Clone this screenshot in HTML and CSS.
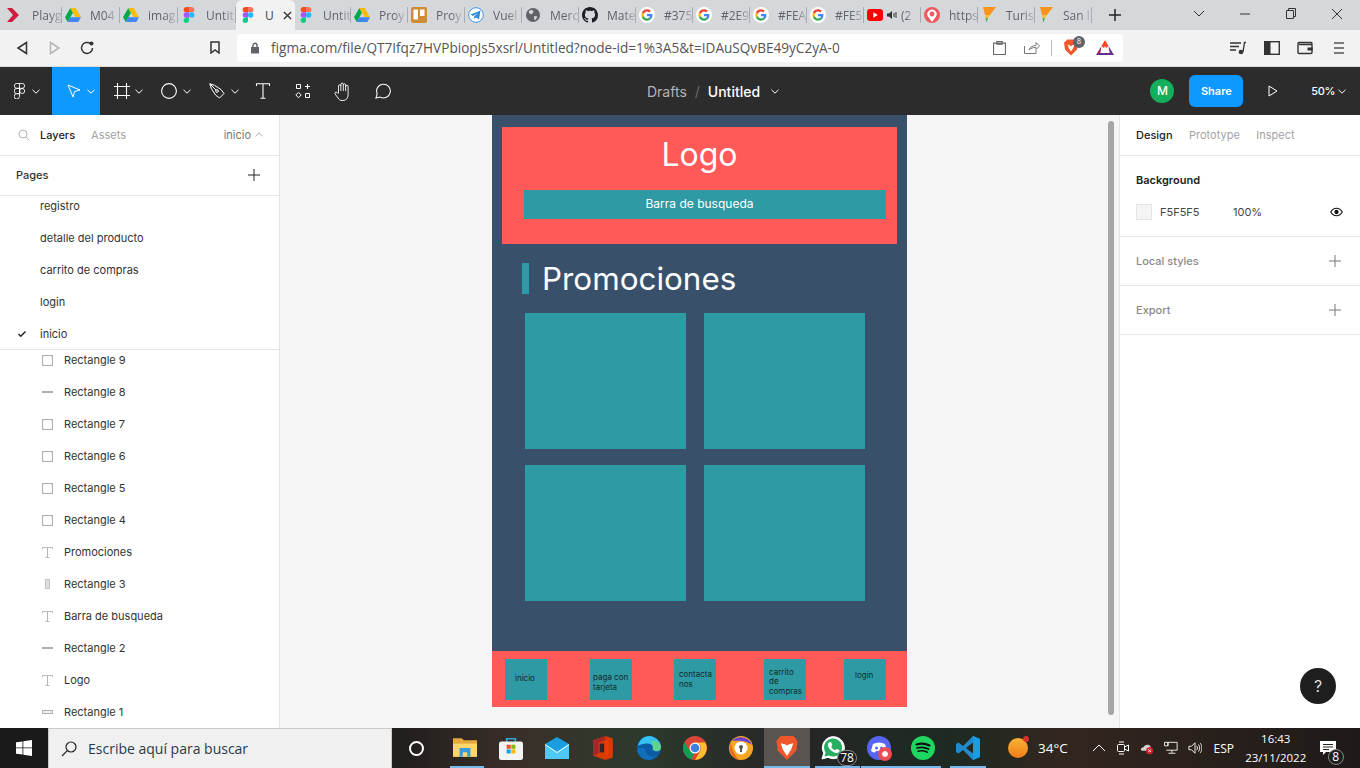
FILE: index.html
```html
<!DOCTYPE html>
<html lang="es">
<head>
    <meta charset="UTF-8">
    <title>Untitled – Figma</title>
    <link rel="stylesheet" href="styles.css">
</head>
<body>
    <svg class="defs" width="0" height="0">
        <symbol id="i-figma" viewBox="0 0 12 18">
            <path fill="#f24e1e" d="M3 0h3v6H3a3 3 0 0 1 0-6z"/>
            <path fill="#ff7262" d="M6 0h3a3 3 0 0 1 0 6H6z"/>
            <path fill="#a259ff" d="M3 6h3v6H3a3 3 0 0 1 0-6z"/>
            <circle fill="#1abcfe" cx="9" cy="9" r="3"/>
            <path fill="#0acf83" d="M3 12h3v3a3 3 0 0 1-6 0 3 3 0 0 1 3-3z"/>
        </symbol>
        <symbol id="i-drive" viewBox="0 0 24 21">
            <path fill="#00a94b" d="M8 0 0 14l4 7 8-14z"/>
            <path fill="#fbbc04" d="M8 0h8l8 14h-8z"/>
            <path fill="#4285f4" d="M4 21h16l4-7H8z"/>
        </symbol>
        <symbol id="i-g" viewBox="-10 -10 68 68">
            <circle cx="24" cy="24" r="34" fill="#fff"/>
            <path fill="#EA4335" d="M24 9.5c3.54 0 6.71 1.22 9.21 3.6l6.85-6.85C35.9 2.38 30.47 0 24 0 14.62 0 6.51 5.38 2.56 13.22l7.98 6.19C12.43 13.72 17.74 9.5 24 9.5z"/>
            <path fill="#4285F4" d="M46.98 24.55c0-1.57-.15-3.09-.38-4.55H24v9.02h12.94c-.58 2.96-2.26 5.48-4.78 7.18l7.73 6c4.51-4.18 7.09-10.36 7.09-17.65z"/>
            <path fill="#FBBC05" d="M10.53 28.59c-.48-1.45-.76-2.99-.76-4.59s.27-3.14.76-4.59l-7.98-6.19C.92 16.46 0 20.12 0 24c0 3.88.92 7.54 2.56 10.78l7.97-6.19z"/>
            <path fill="#34A853" d="M24 48c6.48 0 11.93-2.13 15.89-5.81l-7.73-6c-2.15 1.45-4.92 2.3-8.16 2.3-6.26 0-11.57-4.22-13.47-9.91l-7.98 6.19C6.51 42.62 14.62 48 24 48z"/>
        </symbol>
        <symbol id="i-flag" viewBox="0 0 16 16">
            <path fill="#f7931e" d="M2 0h13L9 8H4z"/>
            <path fill="#fbc02d" d="M4 8h5l-2 3H4.500z"/>
            <path fill="#4caf50" d="M4.500 11H7l-1 3H5z"/>
            <path fill="#26c6da" d="M5 14h1l-.5 2z"/>
        </symbol>
        <symbol id="i-rect" viewBox="0 0 10 10">
            <rect x=".5" y=".5" width="9" height="9" fill="none" stroke="#b0b0b0"/>
        </symbol>
        <symbol id="i-text" viewBox="0 0 12 12">
            <path fill="none" stroke="#b0b0b0" d="M.5 2.500V.5h11v2M6 .5v11M4 11.500h4"/>
        </symbol>
        <symbol id="i-plus" viewBox="0 0 12 12">
            <path fill="none" stroke="currentColor" d="M6 0v12M0 6h12"/>
        </symbol>
        <symbol id="i-caret" viewBox="0 0 8 5">
            <path fill="none" stroke="currentColor" d="m.5.8 3.500 3.400L7.500.8"/>
        </symbol>
    </svg>

    <!-- browser tabs -->
    <div class="tabs">
        <div class="tab first">
            <svg class="tab-icon" viewBox="0 0 16 16"><path fill="#d01c3f" d="M2 1h5l7 7-7 7H2l6-7z"/></svg>
            <span class="tab-title">Playg</span>
        </div>
        <div class="tab wide"><svg class="tab-icon"><use href="#i-drive"/></svg><span class="tab-title">M04</span></div>
        <div class="tab wide"><svg class="tab-icon"><use href="#i-drive"/></svg><span class="tab-title">imag</span></div>
        <div class="tab wide"><svg class="tab-icon"><use href="#i-figma"/></svg><span class="tab-title">Untit</span></div>
        <div class="tab active">
            <svg class="tab-icon"><use href="#i-figma"/></svg>
            <span class="tab-title">U</span>
            <svg class="tab-close" viewBox="0 0 10 10"><path fill="none" stroke="#333" stroke-width="1.500" d="m1 1 8 8M9 1 1 9"/></svg>
        </div>
        <div class="tab narrow"><svg class="tab-icon"><use href="#i-figma"/></svg><span class="tab-title">Untit</span></div>
        <div class="tab"><svg class="tab-icon"><use href="#i-drive"/></svg><span class="tab-title">Proy</span></div>
        <div class="tab">
            <svg class="tab-icon" viewBox="0 0 16 16"><rect width="16" height="16" rx="2" fill="#cf8c33"/><rect x="2.500" y="2.500" width="4.500" height="10" fill="#fff"/><rect x="9" y="2.500" width="4.500" height="6.500" fill="#fff"/></svg>
            <span class="tab-title">Proy</span>
        </div>
        <div class="tab">
            <svg class="tab-icon" viewBox="0 0 16 16"><circle cx="8" cy="8" r="7.300" fill="#fff" stroke="#3a97e8"/><path fill="#2f8fe0" d="m2.500 7.500 10-4-1.500 9-3-2-1.500 1.500-.5-2.500 4-3.500-5 3z"/></svg>
            <span class="tab-title">Vuel</span>
        </div>
        <div class="tab">
            <svg class="tab-icon" viewBox="0 0 16 16"><circle cx="8" cy="8" r="7" fill="#5f6368"/><path fill="#d5d8db" d="M4 3.500 7.500 3l1 2-2 2.500-2.500-1.500zM9 9l3.500.5-2 3.500-1.500-1z"/></svg>
            <span class="tab-title">Merc</span>
        </div>
        <div class="tab">
            <svg class="tab-icon" viewBox="0 0 16 16"><path fill="#1b1f23" d="M8 0C3.580 0 0 3.580 0 8c0 3.540 2.290 6.530 5.470 7.590.4.07.55-.17.55-.38 0-.19-.01-.82-.01-1.490-2.010.37-2.530-.49-2.690-.94-.09-.23-.48-.94-.82-1.130-.28-.15-.68-.52-.01-.53.63-.01 1.080.58 1.230.82.72 1.210 1.870.87 2.330.66.07-.52.28-.87.51-1.070-1.780-.2-3.640-.89-3.640-3.950 0-.87.31-1.590.82-2.150-.08-.2-.36-1.020.08-2.120 0 0 .67-.21 2.200.82.64-.18 1.320-.27 2-.27.68 0 1.360.09 2 .27 1.530-1.040 2.200-.82 2.200-.82.44 1.100.16 1.920.08 2.120.51.56.82 1.270.82 2.150 0 3.070-1.870 3.750-3.650 3.950.29.25.54.73.54 1.480 0 1.070-.01 1.930-.01 2.200 0 .21.15.46.55.38A8.013 8.013 0 0 0 16 8c0-4.420-3.580-8-8-8z"/></svg>
            <span class="tab-title">Mate</span>
        </div>
        <div class="tab"><svg class="tab-icon"><use href="#i-g"/></svg><span class="tab-title">#375</span></div>
        <div class="tab"><svg class="tab-icon"><use href="#i-g"/></svg><span class="tab-title">#2E9</span></div>
        <div class="tab"><svg class="tab-icon"><use href="#i-g"/></svg><span class="tab-title">#FEA</span></div>
        <div class="tab"><svg class="tab-icon"><use href="#i-g"/></svg><span class="tab-title">#FE5</span></div>
        <div class="tab yt">
            <svg class="tab-icon" viewBox="0 0 16 12"><rect width="16" height="12" rx="3" fill="#f00"/><path fill="#fff" d="m6.300 3.300 4.500 2.700-4.500 2.700z"/></svg>
            <svg class="tab-audio" viewBox="0 0 10 10"><path fill="#333" d="M0 3.500h2L5 1v8L2 6.500H0zM6.500 3h1v4h-1zM8.500 2h1v6h-1z"/></svg>
            <span class="tab-title">(2</span>
        </div>
        <div class="tab">
            <svg class="tab-icon" viewBox="0 0 16 16"><circle cx="8" cy="8" r="8" fill="#f0595f"/><path fill="#fff" d="M8 15 4.300 10A4.600 4.600 0 1 1 11.700 10z"/><circle cx="8" cy="7" r="2.400" fill="#f0595f"/></svg>
            <span class="tab-title">https</span>
        </div>
        <div class="tab"><svg class="tab-icon"><use href="#i-flag"/></svg><span class="tab-title">Turis</span></div>
        <div class="tab"><svg class="tab-icon"><use href="#i-flag"/></svg><span class="tab-title">San l</span></div>
        <svg class="new-tab" viewBox="0 0 12 12"><path fill="none" stroke="#222" stroke-width="1.500" d="M6 0v12M0 6h12"/></svg>
        <div class="window-btns">
            <svg viewBox="0 0 46 14"><path fill="none" stroke="#333" d="m18 4 5 5 5-5"/></svg>
            <svg viewBox="0 0 46 14"><path fill="none" stroke="#333" d="M18 7h10"/></svg>
            <svg viewBox="0 0 46 14"><path fill="none" stroke="#333" d="M18.500 3.500h7v8h-7zM20.500 3.500v-2h7v8h-2"/></svg>
            <svg viewBox="0 0 46 14"><path fill="none" stroke="#333" d="m18 2 10 10M28 2 18 12"/></svg>
        </div>
    </div>

    <!-- address bar -->
    <div class="address-row">
        <div class="nav-btns">
            <svg class="nav-icon" viewBox="0 0 12 14"><path fill="none" stroke="#333" stroke-width="1.500" d="M10.500 1.500v11L2 7z"/></svg>
            <svg class="nav-icon off" viewBox="0 0 12 14"><path fill="none" stroke="#b5b5b5" stroke-width="1.500" d="M1.500 1.500v11L10 7z"/></svg>
            <svg class="nav-icon reload" viewBox="0 0 14 14"><path fill="none" stroke="#333" stroke-width="1.500" d="M12.500 7a5.500 5.500 0 1 1-2-4.300"/><circle cx="11.500" cy="2.500" r="2" fill="#333"/></svg>
        </div>
        <svg class="bookmark" viewBox="0 0 10 13"><path fill="none" stroke="#333" stroke-width="1.500" d="M1 1h8v11L5 9l-4 3z"/></svg>
        <div class="url-pill">
            <svg class="lock" viewBox="0 0 10 12"><path fill="#5f6368" d="M1 5h8v6.500H1z"/><path fill="none" stroke="#5f6368" stroke-width="1.400" d="M3 5V3.300a2 2 0 0 1 4 0V5"/></svg>
            <span class="url">figma.com/file/QT7Ifqz7HVPbiopJs5xsrl/Untitled?node-id=1%3A5&amp;t=IDAuSQvBE49yC2yA-0</span>
            <div class="pill-tools">
                <svg class="clip" viewBox="0 0 12 13"><path fill="none" stroke="#666" d="M.5 2h11v10.500H.5zM3.500.5h5V3h-5z"/></svg>
                <svg class="share-ico" viewBox="0 0 16 13"><path fill="none" stroke="#777" d="M.5 5v7.500H12V9M5 9c1-3 4-4.500 7-4.500V1.500L15.500 5 12 8.500V6.500C9 6.500 7 7 5 9z"/></svg>
                <span class="pill-sep"></span>
                <div class="brave-wrap">
                    <svg class="brave-ico" viewBox="0 0 14 16"><path fill="#f1562b" d="M3 0h8l1 1.500L14 3l-1 7-6 6-6-6L0 3l2-1.500z"/><path fill="#fff" d="M3.500 5 6 6l1 1 1-1 2.500-1L9 9l-2 3-2-3z"/></svg>
                    <span class="brave-badge">8</span>
                </div>
                <svg class="bat" viewBox="0 0 18 15"><path fill="#ff4724" d="M9 0 5.500 6 9 9l3.500-3z"/><path fill="#9e1f63" d="M5.500 6 0 15h4z"/><path fill="#662d91" d="M12.500 6 18 15h-4z"/><path fill="#662d91" d="M0 15h18l-4-2H4z"/><path fill="#fff" d="M9 6 6 12h6z"/></svg>
            </div>
        </div>
        <div class="browser-tools">
            <svg viewBox="0 0 16 13"><path fill="none" stroke="#333" stroke-width="1.300" d="M0 1.500h11M0 5h9M0 8.500h6"/><circle cx="11" cy="10.500" r="2.300" fill="#333"/><path fill="none" stroke="#333" stroke-width="1.300" d="M13 10.500 14.500 1H16"/></svg>
            <svg viewBox="0 0 16 14"><rect x=".7" y=".7" width="14.600" height="12.600" fill="none" stroke="#333" stroke-width="1.400"/><rect x="1" y="1" width="5.500" height="12" fill="#333"/></svg>
            <svg viewBox="0 0 16 13"><path fill="none" stroke="#333" stroke-width="1.400" d="M15 3V2a1 1 0 0 0-1-1H2a1 1 0 0 0-1 1v9a1 1 0 0 0 1 1h12a1 1 0 0 0 1-1V4a1 1 0 0 0-1-1H2"/><rect x="10.500" y="6" width="5" height="3" fill="#333"/></svg>
            <svg viewBox="0 0 16 13"><path fill="none" stroke="#555" stroke-width="1.500" d="M3 1.500h10M3 6.500h10M3 11.500h10"/></svg>
        </div>
    </div>

    <!-- figma toolbar -->
    <div class="toolbar">
        <div class="tool-group">
            <div class="tool logo-tool">
                <svg class="ico-logo" viewBox="0 0 12 18"><path fill="none" stroke="#fff" d="M3 .5h6a2.750 2.750 0 0 1 0 5.500H3A2.750 2.750 0 0 1 3 .5zM6 .5v11.500M3 6h3v6H3a3 3 0 0 1 0-6zM3 12h3v3a3 3 0 0 1-6 0 3 3 0 0 1 3-3z"/><circle cx="9" cy="9" r="2.800" fill="none" stroke="#fff"/></svg>
                <svg class="caret"><use href="#i-caret"/></svg>
            </div>
            <div class="tool move-tool">
                <svg class="ico-move" viewBox="0 0 14 14"><path fill="none" stroke="#fff" d="M1 1 13 6 7.500 7.500 6 13z"/></svg>
                <svg class="caret"><use href="#i-caret"/></svg>
            </div>
            <div class="tool frame-tool">
                <svg class="ico" viewBox="0 0 16 16"><path fill="none" stroke="#fff" stroke-width="1.100" d="M3.500 0v16M12.500 0v16M0 3.500h16M0 12.500h16"/></svg>
                <svg class="caret"><use href="#i-caret"/></svg>
            </div>
            <div class="tool">
                <svg class="ico" viewBox="0 0 16 16"><circle cx="8" cy="8" r="7.400" fill="none" stroke="#fff" stroke-width="1.100"/></svg>
                <svg class="caret"><use href="#i-caret"/></svg>
            </div>
            <div class="tool">
                <svg class="ico" viewBox="0 0 16 16"><path fill="none" stroke="#fff" d="M.8.8 5.500 2.300 12 6.500l3 4-4.500 4.500-4-3L2.300 5.500zM.8.800 7 7"/><circle cx="8" cy="8" r="1.300" fill="none" stroke="#fff"/></svg>
                <svg class="caret"><use href="#i-caret"/></svg>
            </div>
            <div class="tool single">
                <svg class="ico" viewBox="0 0 14 16"><path fill="none" stroke="#fff" stroke-width="1.100" d="M.5 3V.7h13V3M7 .7v14.600M4.500 15.300h5"/></svg>
            </div>
            <div class="tool single">
                <svg class="ico" viewBox="0 0 16 16"><path fill="none" stroke="#fff" d="M1.500 1.500h4v4h-4zM10.500 10.500h4v4h-4zM3.500 9.300l2.700 2.700-2.700 2.700L.8 12zM12.500 1v5M10 3.500h5"/></svg>
            </div>
            <div class="tool single">
                <svg class="ico-hand" viewBox="0 0 18 19"><path fill="none" stroke="#fff" stroke-width=".9" d="M4.500 11V4a1.200 1.200 0 0 1 2.400 0V2.300a1.200 1.200 0 0 1 2.400 0V3a1.200 1.200 0 0 1 2.400 0V4.500a1.200 1.200 0 0 1 2.400 0V13c0 3-2 5.500-5 5.500H8c-2 0-3-1-4-2.500L1 11.800c-.6-1.200 1-2.300 2-1.300l1.500 1.500M6.900 4v5M9.300 3v6M11.700 4v5"/></svg>
            </div>
            <div class="tool single">
                <svg class="ico" viewBox="0 0 17 17"><path fill="none" stroke="#fff" stroke-width="1.100" d="M1 16l1.300-4.500A7.300 7.300 0 1 1 5.500 15z"/></svg>
            </div>
        </div>
        <div class="doc-title">
            <span class="drafts">Drafts</span>
            <span class="slash">/</span>
            <span class="doc-name">Untitled</span>
            <svg class="caret"><use href="#i-caret"/></svg>
        </div>
        <div class="tool-right">
            <span class="avatar">M</span>
            <span class="share-btn">Share</span>
            <svg class="play" viewBox="0 0 10 12"><path fill="none" stroke="#fff" d="M1 1v10l8-5z"/></svg>
            <span class="zoom-val">50%</span>
            <svg class="caret"><use href="#i-caret"/></svg>
        </div>
    </div>

    <div class="workspace">
        <!-- layers panel -->
        <aside class="left-panel">
            <div class="panel-head">
                <svg class="search-ico" viewBox="0 0 12 12"><circle cx="5" cy="5" r="4" fill="none" stroke="#b3b3b3"/><path stroke="#b3b3b3" d="m8 8 3.500 3.500"/></svg>
                <span class="tab-on">Layers</span>
                <span class="tab-off">Assets</span>
                <span class="page-name">inicio</span>
                <svg class="caret up"><use href="#i-caret"/></svg>
            </div>
            <div class="pages-head">
                <span>Pages</span>
                <svg class="plus dark"><use href="#i-plus"/></svg>
            </div>
            <div class="page-list">
                <div class="page-row">registro</div>
                <div class="page-row">detalle del producto</div>
                <div class="page-row">carrito de compras</div>
                <div class="page-row">login</div>
                <div class="page-row current">
                    <svg class="check" viewBox="0 0 8 6"><path fill="none" stroke="#222" stroke-width="1.500" d="m.5 3 2.300 2.200L7.500.5"/></svg>
                    inicio
                </div>
            </div>
            <div class="layer-list">
                <div class="layer"><svg class="layer-ico"><use href="#i-rect"/></svg>Rectangle 9</div>
                <div class="layer"><span class="line-ico"></span>Rectangle 8</div>
                <div class="layer"><svg class="layer-ico"><use href="#i-rect"/></svg>Rectangle 7</div>
                <div class="layer"><svg class="layer-ico"><use href="#i-rect"/></svg>Rectangle 6</div>
                <div class="layer"><svg class="layer-ico"><use href="#i-rect"/></svg>Rectangle 5</div>
                <div class="layer"><svg class="layer-ico"><use href="#i-rect"/></svg>Rectangle 4</div>
                <div class="layer"><svg class="layer-ico"><use href="#i-text"/></svg>Promociones</div>
                <div class="layer"><span class="tall-ico"></span>Rectangle 3</div>
                <div class="layer"><svg class="layer-ico"><use href="#i-text"/></svg>Barra de busqueda</div>
                <div class="layer"><span class="line-ico"></span>Rectangle 2</div>
                <div class="layer"><svg class="layer-ico"><use href="#i-text"/></svg>Logo</div>
                <div class="layer"><span class="flat-ico"></span>Rectangle 1</div>
            </div>
        </aside>

        <!-- canvas with the mobile frame -->
        <main class="canvas">
            <div class="frame">
                <div class="frame-head">
                    <div class="logo">Logo</div>
                    <div class="search-bar">Barra de busqueda</div>
                </div>
                <div class="promo-title">
                    <span class="promo-mark"></span>
                    <span class="promo-text">Promociones</span>
                </div>
                <div class="promo-grid">
                    <div class="promo-card"></div>
                    <div class="promo-card"></div>
                    <div class="promo-card"></div>
                    <div class="promo-card"></div>
                </div>
                <div class="frame-nav">
                    <div class="nav-item n-inicio">inicio</div>
                    <div class="nav-item n-paga">paga con tarjeta</div>
                    <div class="nav-item n-contacta">contacta<br>nos</div>
                    <div class="nav-item n-carrito">carrito<br>de<br>compras</div>
                    <div class="nav-item n-login">login</div>
                </div>
            </div>
            <div class="scrollbar"></div>
        </main>

        <!-- design panel -->
        <aside class="right-panel">
            <div class="panel-head right-head">
                <span class="tab-on">Design</span>
                <span class="tab-off">Prototype</span>
                <span class="tab-off">Inspect</span>
            </div>
            <div class="bg-section">
                <div class="section-title">Background</div>
                <div class="bg-row">
                    <span class="swatch"></span>
                    <span class="hex">F5F5F5</span>
                    <span class="opacity">100%</span>
                    <svg class="eye" viewBox="0 0 14 10"><path fill="none" stroke="#111" stroke-width="1.200" d="M.8 5C2.500 2 4.500 1 7 1s4.500 1 6.200 4C11.500 8 9.500 9 7 9S2.500 8 .8 5z"/><circle cx="7" cy="5" r="2.300" fill="#111"/></svg>
                </div>
            </div>
            <div class="plus-section">
                <span>Local styles</span>
                <svg class="plus"><use href="#i-plus"/></svg>
            </div>
            <div class="plus-section">
                <span>Export</span>
                <svg class="plus"><use href="#i-plus"/></svg>
            </div>
        </aside>

        <div class="help">?</div>
    </div>

    <!-- windows taskbar -->
    <footer class="taskbar">
        <div class="start">
            <svg viewBox="0 0 16 16"><path fill="#fff" d="M0 2.300 6.500 1.400v6.100H0zM7.300 1.300 16 0v7.500H7.300zM0 8.300h6.500v6.200L0 13.700zM7.300 8.300H16V16l-8.700-1.200z"/></svg>
        </div>
        <div class="win-search">
            <svg viewBox="0 0 16 16"><circle cx="10" cy="6" r="5" fill="none" stroke="#222" stroke-width="1.200"/><path stroke="#222" stroke-width="1.200" d="M6.300 9.700 1 15"/></svg>
            <span>Escribe aquí para buscar</span>
        </div>
        <div class="cortana"><span class="cortana-ring"></span></div>
        <div class="app running explorer">
            <svg viewBox="0 0 22 20"><path fill="#e6a93c" d="M0 1h8l2 2h12v15H0z"/><path fill="#ffd66b" d="M0 6h22v12H0z"/><path fill="#3a9bdc" d="M6 10h10v8h-3v-4H9v4H6z"/></svg>
        </div>
        <div class="app">
            <svg viewBox="0 0 22 22"><path fill="none" stroke="#2aa7e0" stroke-width="1.500" d="M7 6V2.500h8V6"/><rect y="5" width="22" height="17" rx="2" fill="#f3f3f3"/><path fill="#f25022" d="M7 8h3.700v3.700H7z"/><path fill="#7fba00" d="M11.300 8H15v3.700h-3.700z"/><path fill="#00a4ef" d="M7 12.300h3.700V16H7z"/><path fill="#ffb900" d="M11.300 12.300H15V16h-3.700z"/></svg>
        </div>
        <div class="app">
            <svg viewBox="0 0 24 22"><path fill="#1b9de2" d="M0 7 12 0l12 7v15H0z"/><path fill="#50c8f5" d="M0 7l12 8 12-8v15H0z"/><path fill="#fff" d="M0 7l12 8 12-8v1L12 16 0 8z"/></svg>
        </div>
        <div class="app">
            <svg viewBox="0 0 18 22"><path fill="#d83b01" d="M11 0 0 4v14l11 4 7-2V2z"/><path fill="#a4262c" d="M0 4l11-4v4L5 6v10l-5 2z"/><path fill="#eb3c00" d="M11 4h3v14h-3z"/><path fill="#2d2a28" d="M6 7h4v8H6z"/></svg>
        </div>
        <div class="app">
            <svg viewBox="0 0 24 24"><circle cx="12" cy="12" r="12" fill="#0c59a4"/><path fill="#35c1f1" d="M1 10C2 4 7 0 12 0c6 0 12 5 12 11 0 3-3 5-6 4-2-.5-3-2-2-4-1-3-4-4-7-3.500C5 8 2 9 1 10z"/><path fill="#5fd38d" d="M14 5c5-1 10 2 10 6.500 0 3-3 4.500-6 3.500-2-.7-3-2-2-4 0-2-1-4-2-6z"/><path fill="#116eb8" d="M8 13c0 5 5 9 11 7-2 2-4 4-7 4-6 0-11-4-12-10 2-3 6-3 8-1z"/></svg>
        </div>
        <div class="app">
            <svg viewBox="0 0 24 24"><circle cx="12" cy="12" r="12" fill="#db4437"/><path fill="#0f9d58" d="M12 24A12 12 0 0 1 1.600 6l5.200 9 4.300 2.500 L8 24z"/><path fill="#fbc02d" d="M12 6.500h10.400A12 12 0 0 1 12 24l5.200-9a6 6 0 0 0 0-6z"/><circle cx="12" cy="12" r="5.500" fill="#fff"/><circle cx="12" cy="12" r="4.300" fill="#3f7fe0"/></svg>
        </div>
        <div class="app">
            <svg viewBox="0 0 24 24"><circle cx="12" cy="12" r="12" fill="#f5a623"/><path fill="#6a3fd4" d="M3 5a12 12 0 0 1 20 4c-4-4-12-5-20-4z"/><path fill="#e8661e" d="M2 7c-3 7 1 15 8 17C6 20 3 14 2 7z"/><circle cx="12" cy="12" r="6.500" fill="#fff"/><circle cx="12" cy="11" r="2" fill="#555"/><path fill="#555" d="M11 12h2v4h-2z"/></svg>
        </div>
        <div class="app current running">
            <svg viewBox="0 0 20 23"><path fill="#f1562b" d="M4 0h12l2 2 2 3-1 9-9 9-9-9L0 5l2-3z"/><path fill="#fff" d="M4 7l4 1 2 1 2-1 4-1-2 6-2 3-2 3-2-3-2-3z"/></svg>
        </div>
        <div class="app running">
            <svg viewBox="0 0 24 24"><path fill="#fff" stroke="#fff" d="M1 23l1.700-6A11 11 0 1 1 7 21.300z"/><path fill="#27ae60" d="M3.500 20.500l1.100-4A9 9 0 1 1 8 19.500z"/><path fill="#fff" d="M8 6.500c1-1 2-.5 2.300 0l1 2.200c.2.500-.7 1.500-1 2 1 1.800 2 2.700 3.800 3.500.5-.3 1.300-1.500 1.800-1.200l2.300 1c.5.300.3 1.500-.2 2-1.300 1.500-3.500 1.200-6-.2C9.500 14.500 7.500 12 7 10c-.3-1.300 0-2.500 1-3.500z"/></svg>
            <span class="count">78</span>
        </div>
        <div class="app running">
            <svg viewBox="0 0 24 24"><circle cx="12" cy="12" r="12" fill="#5865f2"/><path fill="#fff" d="M6 8c4-2 8-2 12 0l2 7c-1.500 1-3 1.500-4 1.500l-1-1.500H9l-1 1.500c-1 0-2.500-.5-4-1.500z"/><circle cx="9.500" cy="12" r="1.500" fill="#5865f2"/><circle cx="14.500" cy="12" r="1.500" fill="#5865f2"/></svg>
            <span class="rec-dot"></span>
        </div>
        <div class="app running short spotify">
            <svg viewBox="0 0 24 24"><circle cx="12" cy="12" r="12" fill="#1ed760"/><path fill="none" stroke="#111" stroke-linecap="round" stroke-width="2.200" d="M5.500 8.500c4.500-1.300 9-1 13 1"/><path fill="none" stroke="#111" stroke-linecap="round" stroke-width="1.800" d="M6 12c4-1 8-.7 11.500 1"/><path fill="none" stroke="#111" stroke-linecap="round" stroke-width="1.500" d="M7 15.300c3.300-.8 6.500-.5 9.500.9"/></svg>
        </div>
        <div class="app running short vscode">
            <svg viewBox="0 0 24 24"><path fill="#2489ca" d="M17 0 7 10 2.500 6.500 0 8v8l2.500 1.500L7 14l10 10 7-3V3zm0 6.500v11L10 12z"/><path fill="#1b9de2" d="M17 0l7 3v18l-7 3z"/></svg>
        </div>
        <div class="weather">
            <span class="sun"><span class="sun-dot"></span></span>
            <span>34°C</span>
        </div>
        <div class="tray">
            <svg viewBox="0 0 14 14"><path fill="none" stroke="#fff" d="m1 10 6-6 6 6"/></svg>
            <svg viewBox="0 0 14 14"><rect x="1.500" y="3.500" width="7" height="7" rx="1" fill="none" stroke="#fff"/><path fill="none" stroke="#fff" d="m8.500 6 4-2v6l-4-2M3 1h5M3 13h5"/></svg>
            <svg class="cloud" viewBox="0 0 16 14"><path fill="#d0d0d0" d="M1 9a3 3 0 0 1 3-3c1-3 6-4 8-1v5H2z"/><circle cx="11" cy="10" r="4" fill="#d81f2a"/><path stroke="#fff" d="m9.500 8.500 3 3M12.500 8.500l-3 3"/></svg>
            <svg viewBox="0 0 16 16"><path fill="none" stroke="#fff" d="M4.500 5.500V1.500h10.500v9H2.500M.5 1.500h4v4h-4zM9 10.500v3M5 14h8"/></svg>
            <svg viewBox="0 0 16 16"><path fill="none" stroke="#fff" d="M1 6h3l4-4v12l-4-4H1zM10 5.500c1 1.500 1 3.500 0 5M12 4c1.800 2.500 1.800 5.500 0 8M14 2.500c2.500 3.500 2.500 7.500 0 11"/></svg>
        </div>
        <span class="lang">ESP</span>
        <div class="clock">
            <span>16:43</span>
            <span>23/11/2022</span>
        </div>
        <div class="notif">
            <svg viewBox="0 0 16 14"><path fill="#fff" d="M0 0h16v11H6l-3 3v-3H0z"/><path stroke="#222" d="M3 3.500h10M3 6h10M3 8.500h6"/></svg>
            <span class="count">8</span>
        </div>
    </footer>
</body>
</html>
```

FILE: styles.css
```css
* {
    box-sizing: border-box;
}

body {
    margin: 0;
    width: 1360px;
    height: 768px;
    overflow: hidden;
    font-family: "Inter", sans-serif;
    background: #fff;
}

.defs {
    display: block;
    height: 0;
}

svg {
    display: block;
    flex: none;
}

/* Browser tabs */
.tabs {
    display: flex;
    height: 30px;
    background: #d5d8db;
    font-family: "Open Sans", sans-serif;
    font-size: 12px;
    color: #5f6368;
}

.tab {
    display: flex;
    flex: none;
    align-items: center;
    gap: 9px;
    width: 57px;
    height: 30px;
    padding: 0 3px;
    position: relative;
}

.tab::after {
    content: "";
    position: absolute;
    right: 0;
    top: 7px;
    height: 16px;
    width: 1px;
    background: #a9adb1;
}

.tab.first {
    width: 62px;
    padding-left: 5px;
    gap: 11px;
}

.tab.wide {
    width: 58px;
}

.tab.narrow {
    width: 56px;
}

.tab.active {
    width: 59px;
    padding-left: 4px;
    background: #f2f2f2;
    border-radius: 6px 6px 0 0;
    color: #444;
}

.tab.active::after {
    display: none;
}

.tab-icon {
    width: 16px;
    height: 16px;
}

.tab-title {
    white-space: nowrap;
    -webkit-mask-image: linear-gradient(to right, #000 60%, rgba(0, 0, 0, .25));
    mask-image: linear-gradient(to right, #000 60%, rgba(0, 0, 0, .25));
}

.tab-close {
    width: 9px;
    height: 9px;
    margin: 0 5px 0 auto;
}

.tab.active .tab-title {
    -webkit-mask-image: none;
    mask-image: none;
}

.tab.yt {
    gap: 4px;
}

.tab-audio {
    width: 10px;
    height: 10px;
}

.new-tab {
    width: 12px;
    height: 12px;
    margin: 9px 0 0 17px;
}

.window-btns {
    display: flex;
    flex: none;
    margin-left: 55px;
}

.window-btns svg {
    width: 46px;
    height: 14px;
    margin-top: 7px;
}

/* Address bar */
.address-row {
    display: flex;
    align-items: center;
    height: 37px;
    padding-bottom: 1px;
    background: #f2f2f2;
    border-bottom: 1px solid #d9d9d9;
}

.nav-btns {
    display: flex;
    align-items: center;
    width: 210px;
    padding-left: 16px;
}

.nav-icon {
    width: 12px;
    height: 14px;
    margin-right: 21px;
}

.nav-icon.off {
    margin-right: 19px;
}

.nav-icon.reload {
    width: 14px;
    height: 14px;
}

.bookmark {
    width: 10px;
    height: 13px;
}

.url-pill {
    display: flex;
    align-items: center;
    width: 886px;
    height: 28px;
    margin-left: 17px;
    padding-left: 13px;
    background: #fff;
    border-radius: 4px;
}

.lock {
    width: 10px;
    height: 12px;
}

.url {
    margin-left: 11px;
    font-family: "Open Sans", sans-serif;
    font-size: 13.600px;
    color: #555;
    white-space: nowrap;
}

.pill-tools {
    display: flex;
    align-items: center;
    margin-left: auto;
    padding-right: 9px;
}

.clip {
    width: 13px;
    height: 14px;
}

.share-ico {
    width: 16px;
    height: 13px;
    margin-left: 18px;
}

.pill-sep {
    width: 1px;
    height: 16px;
    margin-left: 11px;
    background: #bbb;
}

.brave-wrap {
    position: relative;
    margin-left: 12px;
}

.brave-ico {
    width: 14px;
    height: 17px;
}

.brave-badge {
    position: absolute;
    left: 9px;
    top: -3px;
    width: 12px;
    height: 12px;
    border-radius: 50%;
    background: #5f6368;
    color: #fff;
    font-size: 7px;
    line-height: 12px;
    text-align: center;
}

.bat {
    width: 18px;
    height: 15px;
    margin-left: 18px;
}

.browser-tools {
    display: flex;
    align-items: center;
    gap: 17.500px;
    margin-left: 107px;
}

.browser-tools svg {
    width: 16px;
    height: 14px;
}

/* Figma toolbar */
.toolbar {
    display: flex;
    align-items: center;
    height: 48px;
    background: #2c2c2c;
    color: #fff;
}

.tool-group {
    display: flex;
    height: 48px;
    width: 403px;
}

.tool {
    display: flex;
    align-items: center;
    gap: 6px;
    width: 48px;
    height: 48px;
    padding-left: 13px;
}

.tool.single {
    width: 40px;
    padding-left: 0;
    justify-content: center;
}

.logo-tool {
    width: 52px;
    padding-left: 14px;
    gap: 7px;
}

.move-tool {
    padding-left: 15px;
    background: #0d99ff;
}

.frame-tool {
    padding-left: 14px;
    gap: 5px;
}

.ico {
    width: 16px;
    height: 16px;
}

.ico-logo {
    width: 11px;
    height: 16px;
}

.ico-move {
    width: 14px;
    height: 14px;
}

.ico-hand {
    width: 18px;
    height: 19px;
}

.caret {
    width: 8px;
    height: 5px;
    color: #fff;
}

.doc-title {
    display: flex;
    align-items: center;
    margin-left: 244px;
    font-size: 14px;
}

.drafts {
    color: #b3b3b3;
}

.slash {
    margin: 0 8px;
    color: #6b6b6b;
}

.doc-name {
    font-weight: 500;
    margin-right: 11px;
}

.tool-right {
    display: flex;
    align-items: center;
    margin-left: auto;
    padding-right: 14px;
}

.avatar {
    width: 24px;
    height: 24px;
    border-radius: 50%;
    background: #14ae5c;
    text-align: center;
    font-size: 12px;
    font-weight: 500;
    line-height: 24px;
}

.share-btn {
    width: 54px;
    height: 32px;
    margin-left: 15px;
    border-radius: 6px;
    background: #0d99ff;
    text-align: center;
    font-size: 11px;
    font-weight: 600;
    line-height: 32px;
}

.play {
    width: 10px;
    height: 12px;
    margin-left: 25px;
}

.zoom-val {
    margin: 0 3px 0 33px;
    font-size: 11px;
    font-weight: 500;
    letter-spacing: -.4px;
}

/* Main area */
.workspace {
    display: flex;
    height: 613px;
    position: relative;
}

.left-panel {
    width: 280px;
    border-right: 1px solid #e5e5e5;
    background: #fff;
    font-size: 11px;
    color: #333;
    overflow: hidden;
}

.panel-head {
    display: flex;
    align-items: center;
    height: 41px;
    padding: 0 16px 1px 18px;
    border-bottom: 1px solid #e5e5e5;
}

.search-ico {
    width: 12px;
    height: 12px;
    margin-right: 10px;
}

.tab-on {
    font-weight: 500;
    color: #222;
}

.tab-off {
    margin-left: 16px;
    color: #a3a3a3;
}

.page-name {
    margin-left: auto;
    color: #777;
}

.caret.up {
    margin-left: 4px;
    color: #aaa;
    transform: rotate(180deg);
}

.pages-head {
    display: flex;
    align-items: center;
    justify-content: space-between;
    height: 40px;
    padding: 0 19px 2px 16px;
    border-bottom: 1px solid #e5e5e5;
    font-weight: 500;
}

.plus {
    width: 12px;
    height: 12px;
    color: #777;
}

.plus.dark {
    color: #222;
}

.page-list {
    height: 154px;
    border-bottom: 1px solid #e5e5e5;
    overflow: hidden;
}

.page-row {
    display: flex;
    align-items: center;
    height: 32px;
    padding-left: 40px;
    position: relative;
}

.page-row:first-child {
    margin-top: -6px;
}

.check {
    position: absolute;
    left: 18px;
    width: 8px;
    height: 6px;
}

.layer-list {
    height: 378px;
    overflow: hidden;
}

.layer {
    display: flex;
    align-items: center;
    height: 32px;
    padding-left: 42px;
    gap: 11px;
}

.layer:first-child {
    margin-top: -6px;
}

.layer-ico {
    width: 11px;
    height: 11px;
}

.line-ico,
.tall-ico,
.flat-ico {
    flex: none;
    width: 11px;
    height: 2px;
    background: #b0b0b0;
}

.tall-ico {
    width: 5px;
    height: 10px;
    margin: 0 3px;
    background: #ddd;
    border: 1px solid #c4c4c4;
}

.flat-ico {
    height: 4px;
    background: #eee;
    border: 1px solid #b0b0b0;
}

/* Canvas */
.canvas {
    width: 839px;
    position: relative;
    background: #f5f5f5;
    overflow: hidden;
}

.frame {
    width: 415px;
    height: 592px;
    margin-left: 212px;
    padding-top: 12px;
    background: #39506b;
}

.frame-head {
    height: 117px;
    margin: 0 10px;
    padding-top: 10px;
    background: #ff5a58;
    color: #fff;
    text-align: center;
}

.logo {
    height: 53px;
    font-size: 32px;
    line-height: 36px;
}

.search-bar {
    height: 29px;
    margin: 0 11px 0 22px;
    padding-right: 11px;
    background: #2e9aa4;
    font-size: 12px;
    line-height: 28px;
}

.promo-title {
    display: flex;
    gap: 13px;
    height: 31px;
    margin: 19px 0 0 30px;
    color: #fff;
    font-size: 31.400px;
}

.promo-text {
    line-height: 33px;
}

.promo-mark {
    width: 7px;
    height: 31px;
    background: #2e9aa4;
}

.promo-grid {
    display: grid;
    grid-template-columns: 161px 161px;
    grid-auto-rows: 136px;
    gap: 16px 18px;
    margin: 19px 0 0 33px;
}

.promo-card {
    background: #2e9aa4;
}

.frame-nav {
    display: flex;
    height: 56px;
    margin-top: 50px;
    padding: 8px 0 0 13px;
    background: #ff5a58;
}

.nav-item {
    width: 42px;
    height: 41px;
    display: flex;
    align-items: center;
    background: #2e9aa4;
    color: #14292b;
    font-size: 8px;
    line-height: 9.300px;
}

.n-inicio {
    padding: 0 0 2px 10px;
}

.n-paga {
    margin-left: 43px;
    padding: 6px 0 0 3px;
}

.n-contacta {
    margin-left: 42px;
    padding-left: 5px;
}

.n-carrito {
    margin-left: 48px;
    padding: 5px 0 0 5px;
}

.n-login {
    margin-left: 38px;
    padding: 0 0 8px 11px;
}

.scrollbar {
    position: absolute;
    left: 828px;
    top: 6px;
    width: 6px;
    height: 594px;
    border-radius: 3px;
    background: #a5a5a5;
}

.help {
    position: absolute;
    left: 1300px;
    top: 553px;
    width: 36px;
    height: 36px;
    border-radius: 50%;
    background: #1e1e1e;
    color: #ddd;
    font-size: 16px;
    line-height: 36px;
    text-align: center;
}

/* Design panel */
.right-panel {
    width: 241px;
    border-left: 1px solid #e5e5e5;
    background: #fff;
    font-size: 11px;
}

.right-head {
    padding-left: 16px;
}

.right-head .tab-off {
    margin-left: 16.500px;
}

.bg-section {
    height: 81px;
    padding: 17px 16px 0;
    border-bottom: 1px solid #e5e5e5;
}

.section-title {
    font-weight: 600;
    color: #222;
}

.bg-row {
    display: flex;
    align-items: center;
    margin-top: 17px;
    color: #444;
}

.swatch {
    width: 16px;
    height: 16px;
    background: #f5f5f5;
    border: 1px solid #e5e5e5;
}

.hex {
    width: 73px;
    margin-left: 8px;
}

.eye {
    width: 13px;
    height: 10px;
    margin-left: auto;
    margin-right: 1px;
}

.plus-section {
    display: flex;
    align-items: center;
    justify-content: space-between;
    height: 49px;
    padding: 0 19px 0 16px;
    border-bottom: 1px solid #e5e5e5;
    color: #8a8a8a;
    font-weight: 500;
}

/* Taskbar */
.taskbar {
    display: flex;
    align-items: center;
    height: 40px;
    background: linear-gradient(to right, #1a1a1a 0, #1d1b1b 28%, #3a2f29 38%, #2c3a2c 47%, #262626 58%, #1d2a22 70%, #33261f 78%, #1e1a19 100%);
    font-family: "Open Sans", sans-serif;
    color: #fff;
    font-size: 12px;
}

.start {
    display: flex;
    align-items: center;
    justify-content: center;
    width: 48px;
    height: 40px;
}

.start svg {
    width: 16px;
    height: 16px;
}

.win-search {
    display: flex;
    align-items: center;
    width: 344px;
    height: 40px;
    padding-left: 12px;
    background: #f0f0f0;
    border: 1px solid #c9c9c9;
    border-width: 1px 1px 0;
    color: #2b3a4a;
    font-size: 14px;
}

.win-search svg {
    width: 16px;
    height: 16px;
    margin-right: 11px;
}

.cortana {
    display: flex;
    justify-content: center;
    width: 48px;
    margin-right: 2px;
}

.cortana-ring {
    width: 15px;
    height: 15px;
    border: 2px solid #fff;
    border-radius: 50%;
}

.app {
    display: flex;
    align-items: center;
    justify-content: center;
    width: 46px;
    height: 40px;
    position: relative;
}

.app svg {
    width: 24px;
    height: 24px;
}

.app.running::after {
    content: "";
    position: absolute;
    left: 5px;
    right: -4px;
    bottom: 0;
    height: 2px;
    background: #76b9ed;
}

.app.explorer::after {
    left: 8px;
    right: 4px;
}

.app.short::after {
    right: 5px;
}

.app.spotify {
    margin-left: -2px;
}

.app.vscode {
    margin-left: -1px;
}

.app.current {
    background: #5a5450;
}

.app.current::after {
    left: 0;
    right: 0;
}

.count {
    position: absolute;
    right: -1px;
    bottom: 2px;
    width: 20px;
    height: 16px;
    border-radius: 8px;
    border: 1px solid #888;
    background: #1e1e1e;
    color: #fff;
    font-size: 12px;
    line-height: 14px;
    text-align: center;
}

.rec-dot {
    position: absolute;
    right: 10px;
    bottom: 7px;
    width: 14px;
    height: 14px;
    border-radius: 50%;
    background: #f04a55;
    border: 4px solid #f04a55;
    box-shadow: inset 0 0 0 4px #fff;
}

.weather {
    display: flex;
    align-items: center;
    gap: 10px;
    margin-left: 17px;
    font-size: 13.500px;
}

.sun {
    width: 20px;
    height: 20px;
    border-radius: 50%;
    background: linear-gradient(to bottom, #f7b334, #ef7f1a);
    position: relative;
}

.sun-dot {
    position: absolute;
    right: -1px;
    top: -2px;
    width: 6px;
    height: 6px;
    border-radius: 50%;
    background: #d9322a;
}

.tray {
    display: flex;
    align-items: center;
    margin-left: 19px;
}

.tray svg {
    width: 14px;
    height: 14px;
    margin: 0 5px;
}

.lang {
    width: 30px;
    margin-left: 2px;
    text-align: center;
}

.clock {
    display: flex;
    flex-direction: column;
    align-items: center;
    width: 60px;
    margin-left: 7px;
    font-size: 11.500px;
    line-height: 19px;
}

.notif {
    position: relative;
    margin-left: 14px;
}

.notif svg {
    width: 16px;
    height: 14px;
}

.notif .count {
    right: -8px;
    bottom: -10px;
    width: 16px;
}
```
